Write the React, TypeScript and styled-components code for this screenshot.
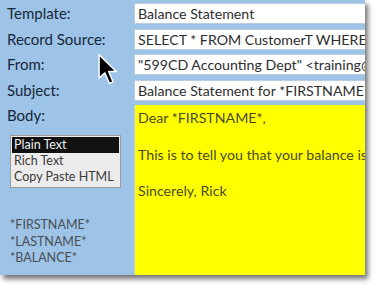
import styled, { createGlobalStyle } from "styled-components";

const GlobalStyle = createGlobalStyle`
  html, body {
    margin: 0;
    padding: 0;
    background: #ffffff;
  }
  body {
    font-family: Lato, "Open Sans", sans-serif;
  }
`;

const fields = [
  { label: "Template:", value: "Balance Statement" },
  { label: "Record Source:", value: "SELECT * FROM CustomerT WHERE (CustomerID=1)" },
  { label: "From:", value: "\"599CD Accounting Dept\" <training@599cd.com>" },
  { label: "Subject:", value: "Balance Statement for *FIRSTNAME* *LASTNAME*" },
];

const formats = ["Plain Text", "Rich Text", "Copy Paste HTML"];
const tags = ["*FIRSTNAME*", "*LASTNAME*", "*BALANCE*"];

function Cursor() {
  return (
    <CursorSvg width="22" height="34" viewBox="0 0 13 21">
      <path
        d="M1 1 L1 15.5 L4.6 12.3 L7.4 18.8 L9.6 17.8 L6.9 11.4 L11.6 11.4 Z"
        fill="#000"
        stroke="#fff"
        strokeWidth="0.9"
        strokeLinejoin="round"
      />
    </CursorSvg>
  );
}

export default function App() {
  return (
    <Page>
      <GlobalStyle />
      <Panel>
        {fields.map((f) => (
          <Row key={f.label}>
            <Label>{f.label}</Label>
            <Field>{f.value}</Field>
          </Row>
        ))}
        <BodyRow>
          <BodySide>
            <Label>Body:</Label>
            <ListBox>
              {formats.map((item, i) => (
                <ListItem key={item} selected={i === 0}>
                  {item}
                </ListItem>
              ))}
            </ListBox>
            <Tags>
              {tags.map((t) => (
                <Tag key={t}>{t}</Tag>
              ))}
            </Tags>
          </BodySide>
          <BodyText>
            <p>Dear *FIRSTNAME*,</p>
            <p>This is to tell you that your balance is *BALANCE*.</p>
            <p>Sincerely, Rick</p>
          </BodyText>
        </BodyRow>
        <Cursor />
      </Panel>
    </Page>
  );
}

const Page = styled.div`
  width: 378px;
  height: 289px;
  overflow: hidden;
`;

const Panel = styled.div`
  position: relative;
  width: 365px;
  height: 275px;
  background: #9dc3e6;
  box-shadow: 3px 4px 5px rgba(0, 0, 0, 0.55);
  padding-top: 3px;
  box-sizing: border-box;
  display: flex;
  flex-direction: column;
  gap: 4.5px;
  overflow: hidden;
`;

const Row = styled.div`
  display: grid;
  grid-template-columns: 134px 1fr;
  height: 21px;
`;

const Label = styled.div`
  padding-left: 7px;
  font-size: 15px;
  line-height: 21px;
  color: #17273a;
  white-space: nowrap;
`;

const Field = styled.div`
  background: #ffffff;
  border: 1px solid #b9cde2;
  border-right: none;
  box-sizing: border-box;
  padding-left: 3px;
  font-size: 14.2px;
  line-height: 19px;
  color: #2e2e2e;
  white-space: nowrap;
  overflow: hidden;
`;

const BodyRow = styled.div`
  flex: 1;
  display: grid;
  grid-template-columns: 134px 1fr;
  min-height: 0;
`;

const BodySide = styled.div`
  display: flex;
  flex-direction: column;
`;

const ListBox = styled.div`
  margin: 9px 0 0 10px;
  width: 111px;
  height: 53px;
  box-sizing: border-box;
  background: #ececec;
  border: 1px solid #9a9a9a;
  padding: 1px;
  overflow: hidden;
`;

const ListItem = styled.div<{ selected: boolean }>`
  height: 16px;
  line-height: 16px;
  font-size: 12.5px;
  padding-left: 2px;
  white-space: nowrap;
  color: ${(p) => (p.selected ? "#f0f0f0" : "#3a3a3a")};
  background: ${(p) => (p.selected ? "#111111" : "transparent")};
`;

const Tags = styled.div`
  margin: 29px 0 0 10px;
  display: flex;
  flex-direction: column;
`;

const Tag = styled.div`
  font-size: 12.5px;
  line-height: 16.5px;
  color: #4a4f55;
`;

const BodyText = styled.div`
  background: #ffff00;
  border-left: 1px solid #b9cde2;
  padding: 4px 0 0 3px;
  font-size: 14.2px;
  line-height: 18px;
  color: #4a4a28;
  white-space: nowrap;
  overflow: hidden;

  p {
    margin: 0 0 18.5px;
  }
`;

const CursorSvg = styled.svg`
  position: absolute;
  left: 97px;
  top: 53px;
`;
